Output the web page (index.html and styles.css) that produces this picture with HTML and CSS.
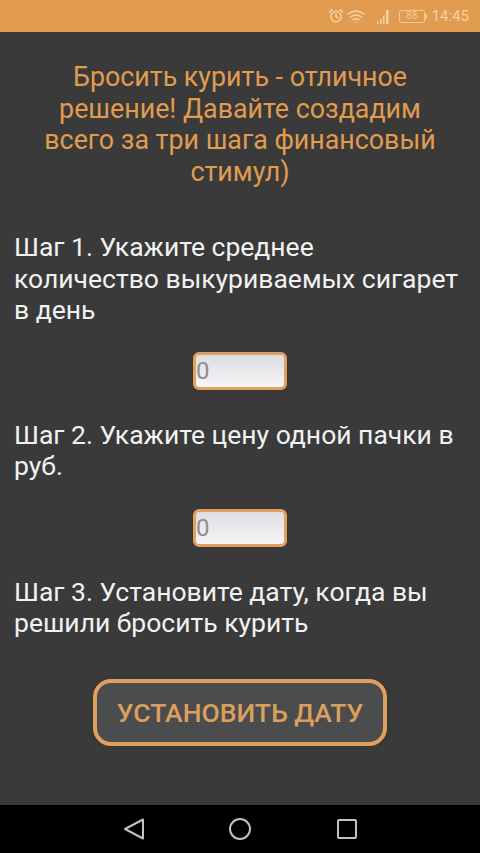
FILE: index.html
```html
<!DOCTYPE html>
<html lang="ru">
<head>
<meta charset="utf-8">
<title>Бросить курить</title>
<link rel="stylesheet" href="styles.css">
</head>
<body>
<div class="phone">
  <header class="status">
    <svg class="ic alarm" viewBox="0 0 16 16"><circle cx="8" cy="8.500" r="5.200"/><path d="M8 5.500v3.200l2 1.200M1.500 4 4 1.600M14.500 4 12 1.600"/></svg>
    <svg class="ic wifi" viewBox="0 0 18 14"><path d="M1 5q8-6 16 0M3.500 8q5.500-4 11 0M6 10.800q3-2 6 0"/><circle cx="9" cy="12.600" r=".8"/></svg>
    <svg class="signal" viewBox="0 0 14 15"><path d="M1 12.500h1.500V15H1zM4 10h1.500v5H4zM7 6.500h1.500V15H7zM10 1h2.500v14H10z"/></svg>
    <span class="battery"><span class="level">88</span></span>
    <span class="clock">14:45</span>
  </header>
  <main class="content">
    <h1 class="title">Бросить курить - отличное решение! Давайте создадим всего за три шага финансовый стимул)</h1>
    <p class="step step-1">Шаг 1. Укажите среднее количество выкуриваемых сигарет в день</p>
    <div class="field field-1"><input class="num" type="text" value="0"></div>
    <p class="step step-2">Шаг 2. Укажите цену одной пачки в руб.</p>
    <div class="field field-2"><input class="num" type="text" value="0"></div>
    <p class="step step-3">Шаг 3. Установите дату, когда вы решили бросить курить</p>
    <div class="action"><button class="date-btn" type="button">УСТАНОВИТЬ ДАТУ</button></div>
  </main>
  <nav class="navbar">
    <svg class="nav-ic" viewBox="0 0 24 24"><path d="M21 2.500v19L3 12z"/></svg>
    <svg class="nav-ic" viewBox="0 0 24 24"><circle cx="12" cy="12" r="10"/></svg>
    <svg class="nav-ic" viewBox="0 0 24 24"><rect x="3" y="3" width="18" height="18" rx="1"/></svg>
  </nav>
</div>
</body>
</html>
```
FILE: styles.css
```css
* { box-sizing: border-box; }
html, body { margin: 0; padding: 0; }
body { font-family: Roboto, "Noto Sans", sans-serif; background: #3a3a3a; }
.phone { width: 480px; height: 853px; display: flex; flex-direction: column; overflow: hidden; }
.status {
  height: 32px; flex: none; background: #e19c4f; color: #f3d3a8;
  display: flex; align-items: center; justify-content: flex-end;
  padding: 0 11px 0 0;
}
.ic { fill: none; stroke: #f3d3a8; stroke-width: 1.500; stroke-linecap: round; }
.alarm { width: 16px; height: 16px; margin-right: 3px; }
.wifi { width: 18px; height: 14px; margin-right: 11px; }
.wifi circle { fill: #f3d3a8; stroke: none; }
.signal { width: 14px; height: 15px; fill: #f3d3a8; margin-right: 9px; }
.battery {
  width: 26px; height: 13px; border: 1px solid #efc997; border-radius: 2px;
  display: flex; align-items: center; justify-content: center; margin-right: 7px;
  position: relative;
}
.battery::after { content: ""; position: absolute; right: -3px; top: 3px; width: 2px; height: 5px; background: #efc997; }
.level { font-size: 10px; line-height: 1; color: #efc997; }
.clock { font-size: 15px; }
.content { flex: 1; padding: 0 14px; min-height: 0; }
.title {
  margin: 30px 24px 0; font-size: 26.800px; font-weight: 400; line-height: 31.500px;
  text-align: center; color: #e19c4f;
}
.step { margin: 0; max-width: 449px; font-size: 26.500px; line-height: 31.500px; color: #f2f2f2; }
.step-1 { margin-top: 43px; }
.step-2 { margin-top: 29px; }
.step-3 { margin-top: 29px; }
.field { display: flex; justify-content: center; }
.field-1 { margin-top: 26px; }
.field-2 { margin-top: 27px; }
.num {
  width: 94px; height: 38px; padding: 0; border: 3px solid #dba262; border-radius: 6px;
  background: linear-gradient(#dddde2, #f6f6f8); box-shadow: 0 0 2px #4a2c0c;
  color: #8e8e8e; font: 24px Roboto, sans-serif; outline: none;
}
.action { display: flex; justify-content: center; margin-top: 40px; }
.date-btn {
  width: 294px; height: 67px; border: 4px solid #dba262; border-radius: 18px;
  background: #4b4c4e; color: #dca05c; font: 500 26.500px Roboto, sans-serif;
  box-shadow: 0 0 3px #4a2c0c; padding: 0;
}
.navbar {
  height: 48px; flex: none; background: #000; display: flex;
  align-items: center; justify-content: center; gap: 82.500px;
}
.nav-ic { width: 24px; height: 24px; fill: none; stroke: #c2c2c2; stroke-width: 2; stroke-linejoin: round; }
```
